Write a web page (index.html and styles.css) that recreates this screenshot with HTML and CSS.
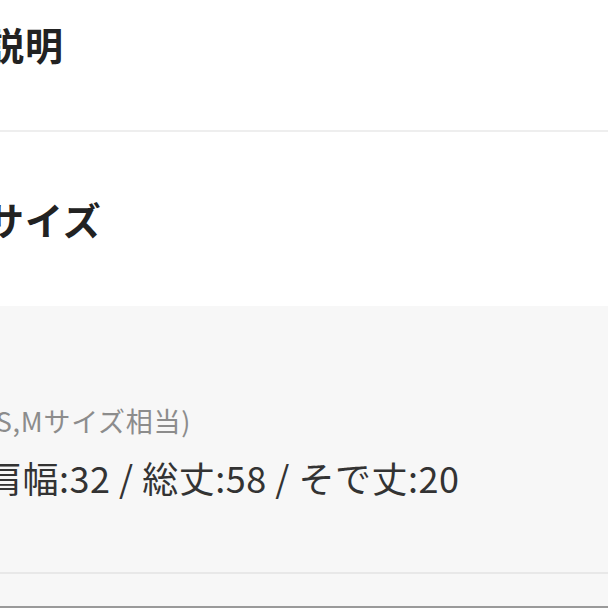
FILE: index.html
```html
<!DOCTYPE html>
<html lang="ja">
<head>
<meta charset="utf-8">
<link rel="stylesheet" href="styles.css">
</head>
<body>
<div class="page">
  <section class="sec sec-desc">
    <h2 class="title">説明</h2>
  </section>
  <section class="sec sec-size">
    <h2 class="title">サイズ</h2>
  </section>
  <section class="detail">
    <p class="note">(S,Mサイズ相当)</p>
    <p class="measure">肩幅:32 / 総丈:58 / そで丈:20</p>
  </section>
  <div class="foot"></div>
</div>
</body>
</html>
```
FILE: styles.css
```css
html, body {
  margin: 0;
  padding: 0;
  width: 608px;
  height: 608px;
  overflow: hidden;
  background: #f7f7f7;
}
.page {
  margin-left: -14px;
  width: 622px;
  font-family: "Noto Sans CJK JP", "Noto Sans", sans-serif;
  display: flex;
  flex-direction: column;
}
.sec {
  background: #fff;
  display: flex;
  align-items: center;
}
.sec-desc {
  height: 130px;
  align-items: flex-start;
  border-bottom: 2px solid #eeeeee;
}
.sec-desc .title {
  margin-top: 17px;
}
.sec-size {
  height: 174px;
}
.title {
  margin: 0;
  font-size: 38px;
  letter-spacing: 1px;
  font-weight: 700;
  color: #222;
  line-height: 1.4;
}
.detail {
  background: #f7f7f7;
  height: 268px;
  border-bottom: 2px solid #e8e8e8;
  padding-top: 97px;
  box-sizing: border-box;
}
.note {
  margin: 0;
  font-size: 27px;
  letter-spacing: 0.7px;
  color: #8c8c8c;
  line-height: 36px;
}
.measure {
  margin: 14px 0 0;
  font-size: 36px;
  letter-spacing: 0.5px;
  color: #333;
  line-height: 48px;
}
.foot {
  height: 32px;
  background: #f7f7f7;
  border-bottom: 2px solid #9a9a9a;
}
```
